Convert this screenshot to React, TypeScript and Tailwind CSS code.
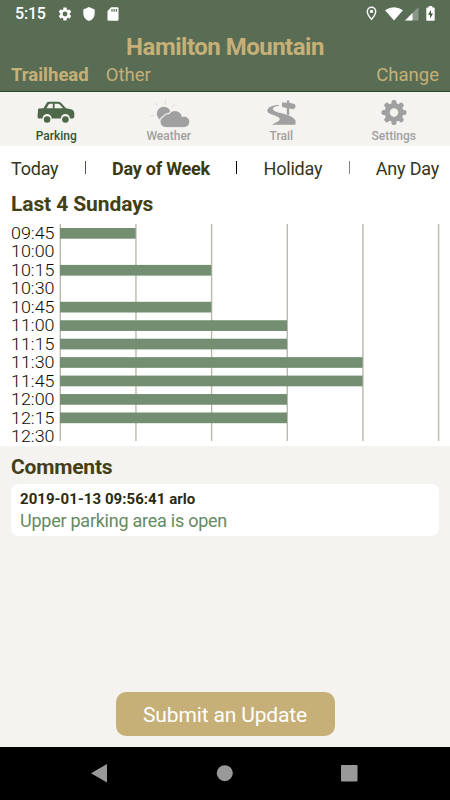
import React from "react";

const rows: [string, number][] = [
  ["09:45", 1],
  ["10:00", 0],
  ["10:15", 2],
  ["10:30", 0],
  ["10:45", 2],
  ["11:00", 3],
  ["11:15", 3],
  ["11:30", 4],
  ["11:45", 4],
  ["12:00", 3],
  ["12:15", 3],
  ["12:30", 0],
];

function StatusBar() {
  return (
    <div className="flex h-[27px] items-center justify-between pl-[15px] pr-[15px] text-white">
      <div className="flex items-center">
        <span className="w-[44px] text-[16px] font-medium leading-[27px] tracking-[-0.2px]">5:15</span>
        <svg className="h-[16px] w-[16px] -ml-[2px]" viewBox="0 0 24 24" fill="currentColor">
          <path d="M19.14 12.94c.04-.3.06-.61.06-.94 0-.32-.02-.64-.07-.94l2.03-1.58a.49.49 0 0 0 .12-.61l-1.92-3.32a.488.488 0 0 0-.59-.22l-2.39.96c-.5-.38-1.03-.7-1.62-.94l-.36-2.54a.484.484 0 0 0-.48-.41h-3.84c-.24 0-.43.17-.47.41l-.36 2.54c-.59.24-1.13.57-1.62.94l-2.39-.96c-.22-.08-.47 0-.59.22L2.74 8.87c-.12.21-.08.47.12.61l2.03 1.58c-.05.3-.09.63-.09.94s.02.64.07.94l-2.03 1.58a.49.49 0 0 0-.12.61l1.92 3.32c.12.22.37.29.59.22l2.39-.96c.5.38 1.03.7 1.62.94l.36 2.54c.05.24.24.41.48.41h3.84c.24 0 .44-.17.47-.41l.36-2.54c.59-.24 1.13-.56 1.62-.94l2.39.96c.22.08.47 0 .59-.22l1.92-3.32c.12-.22.07-.47-.12-.61l-2.01-1.58zM12 15.6A3.6 3.6 0 1 1 12 8.4a3.6 3.6 0 0 1 0 7.200z" />
        </svg>
        <svg className="ml-[10px] h-[14px] w-[12px]" viewBox="0 0 12 14" fill="currentColor">
          <path d="M6 0 0.300 2.500V6.500C.300 10 2.700 13 6 14c3.300-1 5.700-4 5.700-7.500v-4z" />
        </svg>
        <svg className="ml-[12px] h-[14px] w-[12px]" viewBox="0 0 12 14">
          <path fill="currentColor" d="M4.200.3H10.300Q11.500.3 11.500 1.500V12.500Q11.500 13.700 10.300 13.700H1.700Q.5 13.700.5 12.500V4z" />
          <path d="M5 2v2.700M7.200 2v2.700M9.400 2v2.700" stroke="#586d54" strokeWidth="1.200" />
        </svg>
      </div>
      <div className="flex items-center">
        <svg className="h-[15px] w-[11px]" viewBox="0 0 11 15">
          <path d="M5.500 1.200a4.200 4.200 0 0 0-4.200 4.200c0 3 4.200 8 4.200 8s4.200-5 4.200-8a4.200 4.200 0 0 0-4.200-4.200z" fill="none" stroke="white" strokeWidth="1.400" />
          <circle cx="5.500" cy="5.400" r="1.700" fill="white" />
        </svg>
        <svg className="ml-[8px] h-[14px] w-[18px]" viewBox="0 0 18 14" fill="currentColor">
          <path d="M0 3.300Q9-2.900 18 3.300L9 13.500z" />
        </svg>
        <svg className="ml-[2px] h-[14px] w-[14px]" viewBox="0 0 14 14">
          <path d="M0 13.500 13.500 0v13.500z" fill="white" fillOpacity=".3" />
          <path d="M0 13.500 7.500 6v7.500z" fill="white" />
        </svg>
        <svg className="ml-[7px] h-[15px] w-[9px]" viewBox="0 0 9 15">
          <path d="M2.700 0h3.600v1.500H8Q8.700 1.500 8.700 2.300V14Q8.700 14.800 8 14.800H1Q.3 14.800.3 14V2.300Q.3 1.500 1 1.500h1.700z" fill="white" />
          <path d="M5 4 2 8.800h2v3.600l3-4.800H5z" fill="#3c5638" />
        </svg>
      </div>
    </div>
  );
}

function CarIcon() {
  return (
    <svg className="mt-[1px] h-[24px] w-[38px]" viewBox="0 0 38 24">
      <path d="M1 9.500Q.5 7.800 2.200 7.600L6.500 7.200 9.500 2.200Q10.200.8 12 .8H21Q23 .8 24.200 2L29 7.200 35 8.600Q37 9.200 37.300 12V15.500Q37.300 17.500 35.500 17.500H33A4.500 4.500 0 0 0 23.800 17.500H14.700A4.500 4.500 0 0 0 5.500 17.500H2Q.5 17.500.5 16z" fill="#4d694a" />
      <path d="M9.500 7.200 11.800 3.300Q12.200 2.700 13 2.700H15.800V7.200zM17.600 2.700H21Q22 2.700 22.700 3.500L26 7.200H17.600z" fill="#f4f3ef" />
      <circle cx="10.100" cy="18.500" r="3.300" fill="#4d694a" />
      <circle cx="28.400" cy="18.500" r="3.300" fill="#4d694a" />
    </svg>
  );
}

const cloudPuffs = [
  [17.8, 23.8, 5.3],
  [20, 20.6, 4.4],
  [27, 20, 7],
  [36, 23.8, 5.3],
];

function WeatherIcon() {
  return (
    <svg className="h-[30px] w-[42px]" viewBox="0 0 42 30">
      <path d="M7 5 9.500 7.500M17.300 2.500V6.800M26.300 6.500 24 9.500M2.500 18.200l4-1.200" stroke="#d6d6d3" strokeWidth="0.900" />
      <circle cx="15.800" cy="15.800" r="7" fill="#a0a0a0" />
      <g fill="#f4f3ef">
        {cloudPuffs.map(([x, y, r]) => (
          <circle key={x} cx={x} cy={y} r={r + 1.200} />
        ))}
      </g>
      <g fill="#a0a0a0">
        {cloudPuffs.map(([x, y, r]) => (
          <circle key={x} cx={x} cy={y} r={r} />
        ))}
        <rect x="17.800" y="20" width="18.200" height="9.100" />
      </g>
    </svg>
  );
}

function TrailIcon() {
  return (
    <svg className="h-[26px] w-[30px]" viewBox="0 0 30 26" fill="#a0a0a0">
      <path d="M13 5C6 5 1.200 7.500 1.300 10.800 1.500 15 13.500 15.500 13.700 19 13.800 21.500 9 22.500 6 24.800H29.500V20.500C27 16.500 21 14.500 14.500 13 7.500 11.200 5.500 9 7.700 7.400 9.200 6.300 11 6 13 5.700z" />
      <path d="M20.800.5h2.400v2.300L28.600 3.900 29.800 6.600 27.800 9.200 23.200 8.400V15L20.800 14.400V8L16 7V2.200L20.800 2.900z" />
    </svg>
  );
}

function GearIcon() {
  return (
    <svg className="h-[26px] w-[26px]" viewBox="-13 -12.500 26 26">
      <g fill="#a0a0a0">
        {[0, 45, 90, 135].map((angle) => (
          <rect key={angle} x="-2.500" y="-12.500" width="5" height="25" rx="2" transform={`rotate(${angle})`} />
        ))}
        <circle r="9.500" />
      </g>
      <circle r="4.200" fill="#f4f3ef" />
    </svg>
  );
}

function Tab({ label, icon, active = false }: { label: string; icon: React.ReactNode; active?: boolean }) {
  return (
    <div className="flex w-1/4 flex-col items-center">
      <div className="flex h-[36px] items-center justify-center pt-[5px]">{icon}</div>
      <span className={`text-[12px] font-medium leading-[16px] ${active ? "text-[#36522f]" : "text-[#a0a0a0]"}`}>{label}</span>
    </div>
  );
}

function Chart() {
  return (
    <svg className="block h-[222px] w-full" viewBox="0 0 450 222">
      {[0, 1, 2, 3, 4, 5].map((n) => (
        <line key={n} x1={60.300 + n * 75.660} x2={60.300 + n * 75.660} y1="0" y2="217" stroke="#b9b9ad" strokeWidth="1.400" />
      ))}
      {rows.map(([time, count], i) => (
        <g key={time}>
          {count > 0 && <rect x="60" y={4 + i * 18.450} width={count * 75.660} height="10.700" fill="#738e70" />}
          <text x="11" y={14.700 + i * 18.480} textLength="43.500" lengthAdjust="spacingAndGlyphs" fontSize="16" fontWeight="300" fill="#0d0d00">
            {time}
          </text>
        </g>
      ))}
    </svg>
  );
}

export default function App() {
  return (
    <div className="flex h-[800px] w-[450px] flex-col overflow-hidden bg-[#f4f3ef] font-['Roboto',sans-serif]">
      <header className="h-[92px] border-b border-[#24471f] bg-[#586d54] text-[#c6b077]">
        <StatusBar />
        <h1 className="h-[36px] text-center text-[24px] font-bold leading-[40px] tracking-[-0.5px]">Hamilton Mountain</h1>
        <div className="flex h-[24px] px-[11px] text-[18.5px] leading-[24px]">
          <span className="font-bold">Trailhead</span>
          <span className="ml-[17px]">Other</span>
          <span className="ml-auto">Change</span>
        </div>
      </header>
      <nav className="flex h-[54px]">
        <Tab label="Parking" icon={<CarIcon />} active />
        <Tab label="Weather" icon={<WeatherIcon />} />
        <Tab label="Trail" icon={<TrailIcon />} />
        <Tab label="Settings" icon={<GearIcon />} />
      </nav>
      <section className="h-[300px] bg-white">
        <div className="flex h-[45px] items-center justify-between px-[11px] text-[18px] tracking-[-0.22px] text-[#35351a]">
          <span>Today</span>
          <i className="mb-[2px] h-[13px] w-px bg-[#555549]" />
          <span className="font-bold text-[#3a390f]">Day of Week</span>
          <i className="mb-[2px] h-[13px] w-px bg-black" />
          <span>Holiday</span>
          <i className="mb-[2px] h-[13px] w-px bg-[#888880]" />
          <span>Any Day</span>
        </div>
        <h2 className="h-[33px] pl-[11px] text-[21px] font-bold leading-[27px] tracking-[-0.1px] text-[#424016]">Last 4 Sundays</h2>
        <Chart />
      </section>
      <section className="px-[11px]">
        <h2 className="h-[38px] text-[21px] font-bold leading-[42px] tracking-[-0.2px] text-[#424016]">Comments</h2>
        <article className="h-[52px] rounded-[8px] bg-white px-[9px] pt-[4px]">
          <p className="text-[15px] font-bold leading-[22px] tracking-[0.05px] text-[#2b2b10]">2019-01-13 09:56:41 arlo</p>
          <p className="text-[18px] leading-[22px] tracking-[-0.25px] text-[#668a63]">Upper parking area is open</p>
        </article>
      </section>
      <button className="mx-auto mb-[11px] mt-auto h-[44px] w-[219px] rounded-[10px] bg-[#c6b077] pt-[3px] text-[21px] tracking-[-0.15px] text-white">Submit an Update</button>
      <footer className="h-[53px] shrink-0 bg-black">
        <svg className="h-[53px] w-[450px]" viewBox="0 0 450 53" fill="#999">
          <path d="M91 26.300 107 17v18.500z" />
          <circle cx="224.800" cy="26.200" r="8" />
          <rect x="341" y="18" width="16.500" height="16.500" rx="1" />
        </svg>
      </footer>
    </div>
  );
}
